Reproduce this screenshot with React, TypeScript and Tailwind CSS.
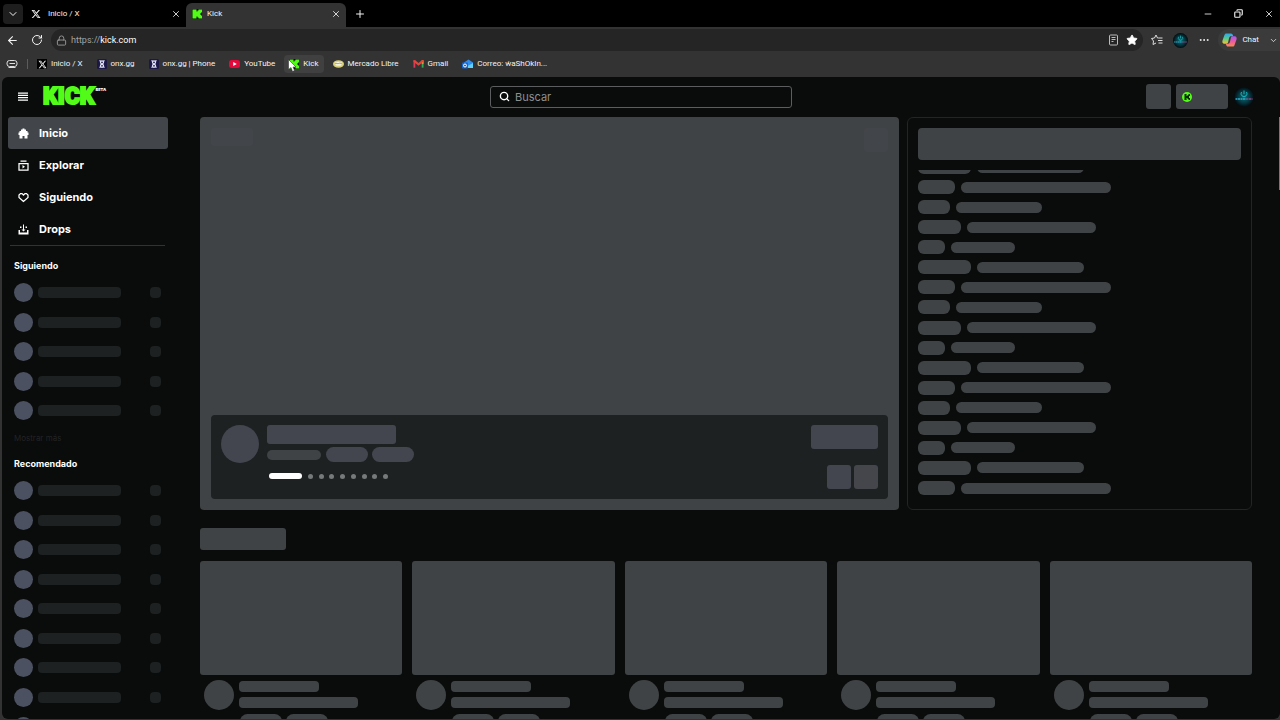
import React from 'react';
import {
    ArrowLeft, ChevronDown, Copy, Ellipsis, Lock, Minus, Plus, RotateCw, Search, Star, X,
} from 'lucide-react';
import { FaXTwitter } from 'react-icons/fa6';

interface IconProps {
    className?: string;
}

interface Bookmark {
    label: string;
    icon: React.ReactNode;
    active?: boolean;
}

interface NavItem {
    label: string;
    icon: React.ReactNode;
    active?: boolean;
}

const KickMark: React.FC<IconProps> = ({ className = 'size-[10px]' }) => (
    <svg viewBox="0 0 20 20" className={className} aria-hidden="true">
        <rect width="20" height="20" fill="#061405" />
        <path d="M1 1h8v4h2V3h2V1h7v6h-2v2h-2v2h2v2h2v6h-7v-2h-2v-2H9v4H1z" fill="#53fc18" />
    </svg>
);

const KnotIcon = () => (
    <svg viewBox="0 0 20 20" className="size-[10px]" aria-hidden="true">
        <rect width="20" height="20" rx="3" fill="#1b1747" />
        <g fill="none" stroke="#e4e4f6" strokeWidth="2.500">
            <circle cx="10" cy="6.500" r="3" />
            <circle cx="10" cy="13.500" r="3" />
            <path d="M5 3l3 2M15 3l-3 2M5 17l3-2M15 17l-3-2" />
        </g>
    </svg>
);

const YouTubeIcon = () => (
    <svg viewBox="0 0 22 20" className="h-[10px] w-[11px]" aria-hidden="true">
        <rect y="2" width="22" height="16" rx="5" fill="#e5083a" />
        <path d="M8.500 6v8l7-4z" fill="#fff" />
    </svg>
);

const MercadoIcon = () => (
    <svg viewBox="0 0 22 20" className="h-[10px] w-[11px]" aria-hidden="true">
        <ellipse cx="11" cy="10" rx="11" ry="7.500" fill="#d8cf7a" />
        <ellipse cx="11" cy="9.500" rx="7.500" ry="4" fill="#f6f3dc" />
        <path d="M4 10c3-3 5 0 7-1s4-1 7 1" fill="none" stroke="#8d8752" strokeWidth="1.500" />
    </svg>
);

const GmailIcon = () => (
    <svg viewBox="0 0 24 20" className="h-[10px] w-[11px]" aria-hidden="true">
        <path d="M1 2h4v16H1z" fill="#d93a5e" />
        <path d="M19 2h4v8h-4z" fill="#f4b63c" />
        <path d="M19 9h4v9h-4z" fill="#35a853" />
        <path d="M1 2h4l7 6 7-6h4v3L12 14 1 5z" fill="#ea4335" />
    </svg>
);

const OutlookIcon = () => (
    <svg viewBox="0 0 22 20" className="h-[10px] w-[11px]" aria-hidden="true">
        <path d="M4 7l9-6 9 6v11H4z" fill="#2f8df0" />
        <path d="M4 18L22 8v10z" fill="#5fd0f7" />
        <rect y="7" width="12" height="12" rx="2" fill="#1266d6" />
        <circle cx="6" cy="13" r="3" fill="none" stroke="#fff" strokeWidth="2" />
    </svg>
);

const CopilotIcon = () => (
    <svg viewBox="0 0 32 30" className="h-[14px] w-[15px]" aria-hidden="true">
        <defs>
            <linearGradient id="copilotLeft" x1="0" y1="0" x2="0" y2="1">
                <stop offset="0" stopColor="#2aa6f2" />
                <stop offset="0.5" stopColor="#5cc98a" />
                <stop offset="1" stopColor="#f3c52f" />
            </linearGradient>
            <linearGradient id="copilotRight" x1="0" y1="0" x2="0" y2="1">
                <stop offset="0" stopColor="#a45cf0" />
                <stop offset="0.5" stopColor="#ec5aa0" />
                <stop offset="1" stopColor="#f88a4f" />
            </linearGradient>
        </defs>
        <path d="M9 1h10c3 0 4 2 5 6h-5c-2 0-3 1-4 4l-2 9c-1 3-2 3-5 3H5c-4 0-5-4-4-7L5 5c1-3 2-4 4-4z" fill="url(#copilotLeft)" />
        <path d="M23 29H13c-3 0-4-2-5-6h5c2 0 3-1 4-4l2-9c1-3 2-3 5-3h3c4 0 5 4 4 7l-4 11c-1 3-2 4-4 4z" fill="url(#copilotRight)" />
    </svg>
);

const ProfilePicture: React.FC<IconProps> = ({ className }) => (
    <svg viewBox="0 0 40 40" className={className} aria-hidden="true">
        <defs>
            <radialGradient id="profileGlow">
                <stop offset="0" stopColor="#0b6f78" />
                <stop offset="0.6" stopColor="#06363f" />
                <stop offset="1" stopColor="#030b10" />
            </radialGradient>
        </defs>
        <circle cx="20" cy="20" r="20" fill="url(#profileGlow)" />
        <path d="M15 10a6 6 0 1 0 10 0M20 7v7" fill="none" stroke="#1cb4bd" strokeWidth="2" />
        <path d="M3 24h22" stroke="#36a9c9" strokeWidth="3" strokeDasharray="4 1" />
        <path d="M25 24h12" stroke="#8b4a86" strokeWidth="3" strokeDasharray="4 1" />
    </svg>
);

const EssentialsIcon = () => (
    <svg viewBox="0 0 24 20" className="h-[10px] w-[12px]" fill="none" stroke="#ddd" strokeWidth="2" aria-hidden="true">
        <rect x="2" y="3" width="20" height="12" rx="5" />
        <path d="M7 9h11M5 17h14" />
    </svg>
);

const FavoritesIcon = () => (
    <svg viewBox="0 0 24 24" className="size-3" fill="none" stroke="#ddd" strokeWidth="2" aria-hidden="true">
        <path d="M15 8h-2l-3-6-3 6-6 1 4 5-1 7 6-3M15 8h8M14 13h9M15 18h8" />
    </svg>
);

const MenuIcon = () => (
    <svg viewBox="0 0 20 18" className="h-[9px] w-[10px]" stroke="#fff" strokeWidth="2.500" aria-hidden="true">
        <path d="M0 2h20M0 6.700h20M0 11.400h20M0 16h20" />
    </svg>
);

const HomeIcon = () => (
    <svg viewBox="0 0 22 22" className="size-[11px]" fill="currentColor" aria-hidden="true">
        <path d="M9 1h4v2h3v3h3v3h2v5h-2v7h-6v-5H9v5H3v-7H1V9h2V6h3V3h3z" />
    </svg>
);

const BrowseIcon = () => (
    <svg viewBox="0 0 22 22" className="size-[11px]" fill="none" stroke="currentColor" strokeWidth="2.500" aria-hidden="true">
        <path d="M5 2h12M2 7h18v13H2z" />
        <path d="M9 10l5 3.500L9 17z" fill="currentColor" stroke="none" />
    </svg>
);

const HeartIcon = () => (
    <svg viewBox="0 0 22 22" className="size-[11px]" fill="none" stroke="currentColor" strokeWidth="2.500" aria-hidden="true">
        <path d="M11 19l-9-8V6l3-3h3l3 3 3-3h3l3 3v5z" />
    </svg>
);

const DropsIcon = () => (
    <svg viewBox="0 0 22 22" className="size-[11px]" fill="currentColor" aria-hidden="true">
        <path d="M1 12h3v5h14v-5h3v9H1zM10 1h2v12h-2zM4 5h3v3H4zM15 5h3v3h-3zM7 11h8l-4 4z" />
    </svg>
);

const bookmarks: Bookmark[] = [
    { label: 'Inicio / X', icon: <span className="flex size-[10px] items-center justify-center bg-black"><FaXTwitter className="size-[9px]" /></span> },
    { label: 'onx.gg', icon: <KnotIcon /> },
    { label: 'onx.gg | Phone', icon: <KnotIcon /> },
    { label: 'YouTube', icon: <YouTubeIcon /> },
    { label: 'Kick', icon: <KickMark />, active: true },
    { label: 'Mercado Libre', icon: <MercadoIcon /> },
    { label: 'Gmail', icon: <GmailIcon /> },
    { label: 'Correo: ẃaShOkIn...', icon: <OutlookIcon /> },
];

const navItems: NavItem[] = [
    { label: 'Inicio', icon: <HomeIcon />, active: true },
    { label: 'Explorar', icon: <BrowseIcon /> },
    { label: 'Siguiendo', icon: <HeartIcon /> },
    { label: 'Drops', icon: <DropsIcon /> },
];

// name / message widths, repeated down the chat
const chatPattern = [
    { name: 53, message: 107 },
    { name: 37, message: 150 },
    { name: 32, message: 86 },
    { name: 43, message: 129 },
    { name: 27, message: 64 },
];
const chatRows = Array.from({ length: 17 }, (_, i) => chatPattern[i % chatPattern.length]);

const TabStrip = () => (
    <div className="flex h-[27px] shrink-0 items-center bg-black pl-[3px]">
        <button aria-label="Buscar pestañas" className="flex size-5 items-center justify-center rounded bg-[#1e1e1e]">
            <ChevronDown className="size-3" />
        </button>
        <div className="flex h-full w-[163px] items-center pr-[5px] pl-2">
            <FaXTwitter className="size-[10px]" />
            <span className="flex-1 pl-[7px]">Inicio / X</span>
            <button aria-label="Cerrar Inicio / X"><X className="size-[10px]" /></button>
        </div>
        <div className="flex h-6 w-[160px] items-center self-end rounded-t-md bg-[#333] pr-[5px] pb-[3px] pl-[6px]">
            <KickMark />
            <span className="flex-1 pl-[5px]">Kick</span>
            <button aria-label="Cerrar Kick"><X className="size-[10px]" /></button>
        </div>
        <button aria-label="Nueva pestaña" className="ml-2"><Plus className="size-3" /></button>
        <div className="ml-auto flex items-center gap-[21px] pr-[6px]">
            <button aria-label="Minimizar"><Minus className="size-[10px]" /></button>
            <button aria-label="Restaurar"><Copy className="size-[9px] -scale-x-100" strokeWidth={3} /></button>
            <button aria-label="Cerrar"><X className="size-[10px]" /></button>
        </div>
    </div>
);

const AddressBar = () => (
    <div className="flex h-[26px] items-center pl-[6px]">
        <button aria-label="Atrás" className="mr-3"><ArrowLeft className="size-[13px]" /></button>
        <button aria-label="Actualizar" className="mr-2"><RotateCw className="size-3" /></button>
        <div className="flex h-[22px] flex-1 items-center rounded-full bg-[#252525] pr-[5px] pl-[5px]">
            <Lock className="size-[11px] text-[#999]" />
            <span className="flex-1 pl-[4px] text-[9px] text-[#a3a3a3]">https://<span className="text-white">kick.com</span></span>
            <button aria-label="Lector" className="mr-[7px] text-[#bbb]">
                <svg viewBox="0 0 22 24" className="h-3 w-[11px]" fill="none" stroke="currentColor" strokeWidth="2" aria-hidden="true">
                    <rect x="3" y="2" width="16" height="20" rx="2" />
                    <path d="M7 7h8M7 11h8M7 15h4" />
                </svg>
            </button>
            <button aria-label="Favorito"><Star className="size-3 fill-white" /></button>
        </div>
        <button aria-label="Favoritos" className="ml-2"><FavoritesIcon /></button>
        <button aria-label="Perfil" className="ml-[10px]"><ProfilePicture className="size-[15px]" /></button>
        <button aria-label="Más" className="ml-[10px]"><Ellipsis className="size-3" /></button>
        <button className="ml-2 flex h-[22px] items-center rounded-l-full bg-[#3b3b3b] pl-[4px]">
            <CopilotIcon />
            <span className="pl-[5px]">Chat</span>
            <ChevronDown className="mr-[2px] ml-[10px] size-[9px]" />
        </button>
    </div>
);

const BookmarksBar = () => (
    <nav aria-label="Marcadores" className="flex h-[22px] items-center pl-[6px]">
        <EssentialsIcon />
        <span className="mr-[4px] ml-[9px] h-[10px] w-px bg-[#5c5c5c]" />
        {bookmarks.map((item) => (
            <a
                key={item.label}
                href="#"
                className={`relative mr-1 flex h-[18px] items-center gap-1 rounded px-[5px] whitespace-nowrap ${item.active ? 'bg-[#404040]' : ''}`}
            >
                {item.icon}
                {item.label}
                {item.active && (
                    <svg viewBox="0 0 20 28" className="absolute top-1 left-1 h-[14px] w-[10px]" aria-hidden="true">
                        <path d="M1 1v20l5-4 3 8 4-2-3-7h6z" fill="#fff" stroke="#222" strokeWidth="1" />
                    </svg>
                )}
            </a>
        ))}
    </nav>
);

const SiteHeader = () => (
    <header className="flex h-10 shrink-0 items-center px-4 pb-px">
        <div className="flex flex-1 items-center">
            <button aria-label="Menú" className="mr-[15px]"><MenuIcon /></button>
            <a href="#" className="flex items-start gap-[1px] leading-none text-[#53fc18]">
                <span className="font-[Roboto] text-[23px] leading-[22px] font-black [-webkit-text-stroke:2px_#53fc18]">KICK</span>
                <span className="text-[4px] leading-[8px] font-black text-white">BETA</span>
            </a>
        </div>
        <label className="flex h-[22px] w-[302px] items-center rounded-[3px] border border-[#5b5d5f] pl-2">
            <Search className="size-[11px]" strokeWidth={3} />
            <input
                type="search"
                placeholder="Buscar"
                aria-label="Buscar"
                className="min-w-0 flex-1 bg-transparent pl-[5px] text-[11px] outline-none placeholder:text-[#8d8f91]"
            />
        </label>
        <div className="flex flex-1 items-center justify-end">
            <span className="size-[25px] rounded-[3px] bg-[#404345]" />
            <button aria-label="Obtener KICKs" className="ml-[5px] flex h-[25px] w-[52px] items-center rounded-[3px] bg-[#404345] pl-[6px]">
                <span className="flex size-[10px] items-center justify-center rounded-full bg-[#53fc18]">
                    <svg viewBox="0 0 12 12" className="size-[6px]" aria-hidden="true">
                        <path d="M1 0h4v4h2V2h2V0h3v4h-2v4h2v4H9v-2H7V8H5v4H1z" fill="#062b00" />
                    </svg>
                </span>
            </button>
            <button aria-label="Cuenta" className="mr-[10px] ml-[6px]"><ProfilePicture className="size-5" /></button>
        </div>
    </header>
);

const ChannelRow = () => (
    <li className="flex items-center">
        <span className="size-[19px] rounded-full bg-[#4b5160]" />
        <span className="ml-[5px] h-[11px] w-[83px] rounded bg-[#1d2122]" />
        <span className="ml-auto size-[11px] rounded bg-[#1d2122]" />
    </li>
);

const Sidebar = () => (
    <aside className="w-[166px] shrink-0 pl-[6px]">
        <nav aria-label="Principal">
            {navItems.map((item) => (
                <a
                    key={item.label}
                    href="#"
                    className={`flex h-8 items-center gap-[10px] rounded-[3px] pl-[10px] text-[11px] font-bold ${item.active ? 'bg-[#42464a]' : ''}`}
                >
                    {item.icon}
                    {item.label}
                </a>
            ))}
        </nav>
        <div className="mr-[3px] ml-[2px] h-px bg-[#303234]" />
        <section className="pr-[7px] pl-[6px]">
            <h2 className="pt-3 text-[9px] leading-4 font-bold">Siguiendo</h2>
            <ul className="mt-[9px] flex h-[137px] flex-col justify-between">
                {Array.from({ length: 5 }, (_, i) => <ChannelRow key={i} />)}
            </ul>
            <button className="mt-[10px] block text-[8px] leading-4 text-[#232425]">Mostrar más</button>
            <h2 className="pt-[10px] text-[9px] leading-4 font-bold">Recomendado</h2>
            <ul className="mt-[9px] flex h-[255px] flex-col justify-between">
                {Array.from({ length: 9 }, (_, i) => <ChannelRow key={i} />)}
            </ul>
        </section>
    </aside>
);

const Hero = () => (
    <section className="flex aspect-video min-w-0 flex-1 flex-col justify-between rounded bg-[#404345] p-[11px]">
        <div className="flex justify-between">
            <span className="h-[18px] w-[42px] rounded-[3px] bg-[#424549]" />
            <span className="size-6 rounded-[3px] bg-[#424549]" />
        </div>
        <div className="flex h-[84px] rounded bg-[#1d2122] p-[10px]">
            <span className="size-[38px] rounded-full bg-[#44464f]" />
            <div className="ml-2">
                <div className="h-[19px] w-[129px] rounded-[3px] bg-[#44464f]" />
                <div className="mt-[3px] flex items-center gap-1">
                    <span className="mr-[1px] h-[10px] w-[54px] rounded-full bg-[#404345]" />
                    <span className="h-[15px] w-[42px] rounded-full bg-[#44464f]" />
                    <span className="h-[15px] w-[42px] rounded-full bg-[#44464f]" />
                </div>
                <div className="mt-[11px] ml-[2px] flex w-[119px] items-center justify-between">
                    <span className="h-[6px] w-[33px] rounded-full bg-white" />
                    {Array.from({ length: 8 }, (_, i) => (
                        <span key={i} className="size-[5px] rounded-full bg-[#777a7b]" />
                    ))}
                </div>
            </div>
            <div className="ml-auto flex flex-col items-end justify-between">
                <span className="h-6 w-[67px] rounded-[3px] bg-[#44464f]" />
                <div className="flex gap-[3px]">
                    <span className="size-6 rounded-[3px] bg-[#44464f]" />
                    <span className="size-6 rounded-[3px] bg-[#44464b]" />
                </div>
            </div>
        </div>
    </section>
);

const ChatPanel = () => (
    <aside aria-label="Chat" className="flex w-[345px] shrink-0 flex-col rounded-md border border-[#222425] px-[10px] pt-[10px] pb-[14px]">
        <div className="h-8 shrink-0 rounded bg-[#404345]" />
        <div className="mt-[10px] flex flex-1 flex-col overflow-hidden">
            <ul className="-mt-[10px] flex flex-1 flex-col justify-between">
                {chatRows.map((row, i) => (
                    <li key={i} className="flex items-center gap-[6px]">
                        <span className="h-[14px] rounded-md bg-[#404345]" style={{ width: row.name }} />
                        <span className="h-[11px] rounded-full bg-[#404345]" style={{ width: row.message }} />
                    </li>
                ))}
            </ul>
        </div>
    </aside>
);

const StreamCard = () => (
    <article>
        <div className="aspect-video rounded-[3px] bg-[#404345]" />
        <div className="flex pt-[5px] pl-1">
            <span className="size-[30px] rounded-full bg-[#404345]" />
            <div className="ml-[5px] pt-px">
                <div className="h-[11px] w-20 rounded bg-[#404345]" />
                <div className="mt-[5px] h-[11px] w-[119px] rounded bg-[#404345]" />
                <div className="mt-[6px] ml-[1px] flex gap-1">
                    <span className="h-[15px] w-[42px] rounded-full bg-[#404345]" />
                    <span className="h-[15px] w-[42px] rounded-full bg-[#404345]" />
                </div>
            </div>
        </div>
    </article>
);

export default function App() {
    return (
        <div className="flex h-screen flex-col overflow-hidden bg-[#333] font-[Roboto,sans-serif] text-[8px] leading-none font-normal text-[#f4f4f4]">
            <TabStrip />
            <div className="h-[50px] shrink-0">
                <AddressBar />
                <BookmarksBar />
            </div>
            <div className="relative mb-px ml-[2px] flex min-h-0 flex-1 flex-col overflow-hidden rounded-md bg-[#0a0b0b] font-[Inter,sans-serif] font-normal text-white">
                <SiteHeader />
                <div className="flex min-h-0 flex-1">
                    <Sidebar />
                    <main className="min-w-0 flex-1 pr-7 pl-8">
                        <div className="flex gap-2">
                            <Hero />
                            <ChatPanel />
                        </div>
                        <div className="mt-[18px] h-[22px] w-[86px] rounded-[3px] bg-[#404345]" />
                        <section className="mt-[11px] grid grid-cols-5 gap-[10px]">
                            {Array.from({ length: 5 }, (_, i) => <StreamCard key={i} />)}
                        </section>
                    </main>
                </div>
                <span className="absolute top-10 right-0 h-[73px] w-px bg-[#777]" />
            </div>
        </div>
    );
}
